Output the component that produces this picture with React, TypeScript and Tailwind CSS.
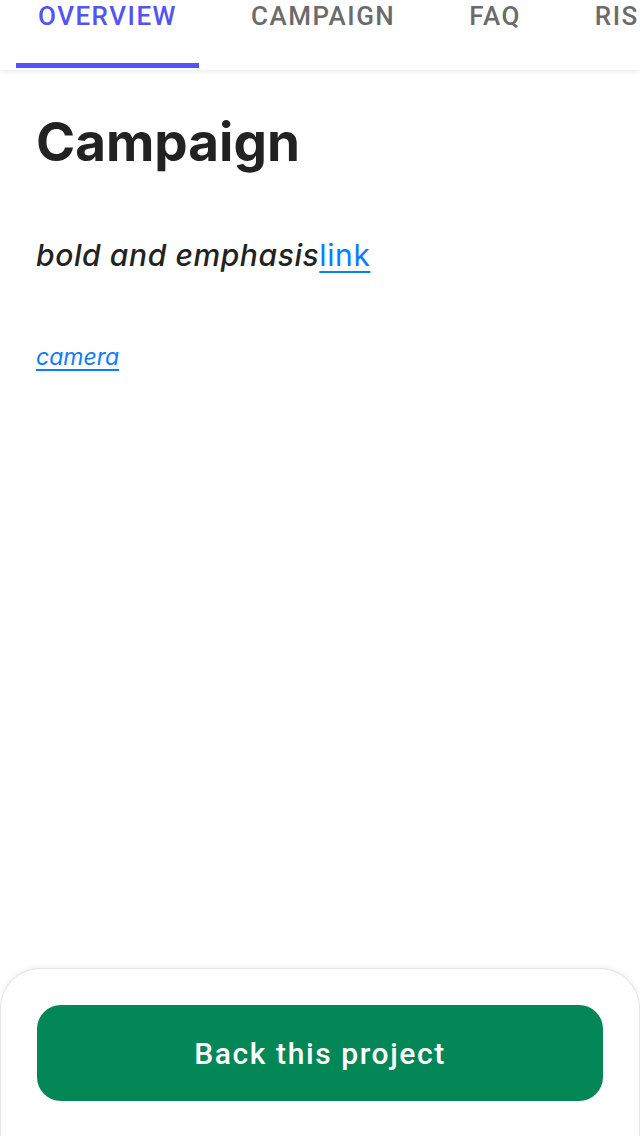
import React from 'react';

const tabs = ['OVERVIEW', 'CAMPAIGN', 'FAQ', 'RISKS'];

const TabBar = ({ active }: { active: number }) => (
    <div className="relative z-10 h-[70px] overflow-hidden bg-white shadow-[0_2px_4px_rgba(0,0,0,0.07)]">
        <div className="flex h-[68px] gap-[30px] pl-4 whitespace-nowrap">
            {tabs.map((tab, i) => (
                <div
                    key={tab}
                    className={`h-[68px] px-[22px] pt-[1px] text-[26px] leading-[30px] font-medium tracking-[1.5px] font-['Roboto',sans-serif] ${
                        i === active ? 'text-[#5353f6] border-b-[5px] border-[#5353f6]' : 'text-[#6b6b6b]'
                    }`}
                >
                    {tab}
                </div>
            ))}
        </div>
    </div>
);

export default function App() {
    return (
        <div className="flex h-[1136px] w-[640px] flex-col overflow-hidden bg-white font-['Inter',sans-serif]">
            <TabBar active={0} />

            <div className="flex-1 px-9">
                <h1 className="mt-[40px] text-[53px] leading-[64px] font-bold text-[#222222]">Campaign</h1>
                <p className="mt-[63px] text-[30px] leading-[36px] tracking-[0.6px] text-[#222222]">
                    <em className="font-medium">bold and emphasis</em>
                    <a className="text-[#0a7cff] underline underline-offset-[5px] decoration-2">link</a>
                </p>
                <p className="mt-[69px] text-[23px] leading-[30px]">
                    <a className="italic text-[#0a7cff] underline underline-offset-[4px] decoration-2">camera</a>
                </p>
            </div>

            <div className="h-[168px] rounded-t-[40px] border border-b-0 border-[#e6e6e6] bg-white px-9 pt-9 shadow-[0_-2px_5px_rgba(0,0,0,0.05)]">
                <button className="flex h-[96px] w-full items-center justify-center rounded-[24px] bg-[#038757] text-[30px] font-medium tracking-[1.6px] text-white font-['Roboto',sans-serif]">
                    Back this project
                </button>
            </div>
        </div>
    );
}
